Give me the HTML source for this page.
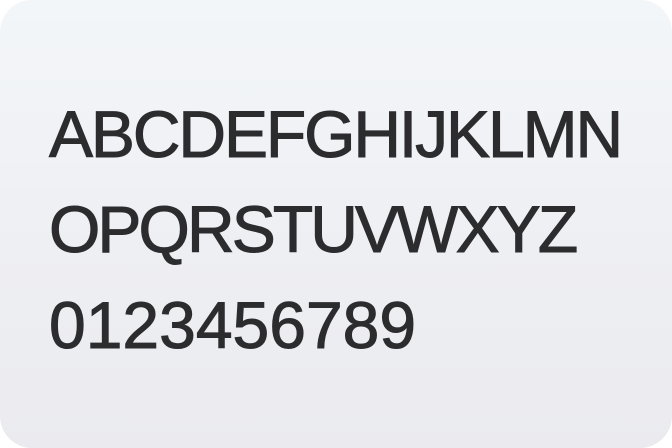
<!DOCTYPE html>
<html><head><style>
html,body{margin:0;padding:0;background:#fff;}
.card{position:relative;width:672px;height:448px;border-radius:32px;overflow:hidden;
background:linear-gradient(180deg,#f3f6f9 0%,#eeeff3 55%,#ebebef 100%);}
.l{position:absolute;left:49px;font-family:"Liberation Sans",sans-serif;font-size:66px;line-height:66px;color:#2c2c2f;white-space:nowrap;-webkit-text-stroke:1px #2c2c2f;}
</style></head><body>
<div class="card">
<div class="l" style="top:101px;letter-spacing:-2.1px">ABCDEFGHIJKLMN</div>
<div class="l" style="top:196px;letter-spacing:-2.9px">OPQRSTUVWXYZ</div>
<div class="l" style="top:292px;letter-spacing:0px">0123456789</div>
</div>
</body></html>
